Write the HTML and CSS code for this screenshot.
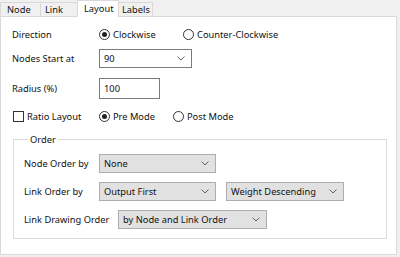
FILE: index.html
```html
<!DOCTYPE html>
<html lang="en">
<head>
  <meta charset="UTF-8" />
  <title>Layout</title>
  <link rel="stylesheet" href="styles.css">
</head>
<body>
  <div class="tabs">
    <div class="tab tab-node">Node</div>
    <div class="tab tab-link">Link</div>
    <div class="tab tab-layout active">Layout</div>
    <div class="tab tab-labels">Labels</div>
  </div>

  <div class="panel">
    <div class="row row-direction">
      <span class="label">Direction</span>
      <span class="opt opt-cw"><span class="radio on"></span>Clockwise</span>
      <span class="opt"><span class="radio"></span>Counter-Clockwise</span>
    </div>

    <div class="row row-start">
      <span class="label">Nodes Start at</span>
      <div class="combo edit w-start"><span>90</span><svg class="chev" width="8" height="5" viewBox="0 0 8 5"><polyline points="0.5,0.5 4,4 7.5,0.5" /></svg></div>
    </div>

    <div class="row row-radius">
      <span class="label">Radius (%)</span>
      <div class="textbox">100</div>
    </div>

    <div class="row row-ratio">
      <span class="label check-label"><span class="check"></span>Ratio Layout</span>
      <span class="opt opt-pre"><span class="radio on"></span>Pre Mode</span>
      <span class="opt"><span class="radio"></span>Post Mode</span>
    </div>

    <fieldset class="group">
      <legend>Order</legend>

      <div class="grow grow-first">
        <span class="glabel">Node Order by</span>
        <div class="combo w-order"><span>None</span><svg class="chev" width="8" height="5" viewBox="0 0 8 5"><polyline points="0.5,0.5 4,4 7.5,0.5" /></svg></div>
      </div>

      <div class="grow">
        <span class="glabel">Link Order by</span>
        <div class="combo w-order"><span>Output First</span><svg class="chev" width="8" height="5" viewBox="0 0 8 5"><polyline points="0.5,0.5 4,4 7.5,0.5" /></svg></div>
        <div class="combo w-weight"><span>Weight Descending</span><svg class="chev" width="8" height="5" viewBox="0 0 8 5"><polyline points="0.5,0.5 4,4 7.5,0.5" /></svg></div>
      </div>

      <div class="grow">
        <span class="glabel wide">Link Drawing Order</span>
        <div class="combo w-draw"><span>by Node and Link Order</span><svg class="chev" width="8" height="5" viewBox="0 0 8 5"><polyline points="0.5,0.5 4,4 7.5,0.5" /></svg></div>
      </div>
    </fieldset>
  </div>
</body>
</html>
```

FILE: styles.css
```css
* { box-sizing: border-box; }

body {
  margin: 0;
  width: 400px;
  height: 257px;
  background: #f0f0f0;
  font-family: "Noto Sans", "Open Sans", sans-serif;
  font-size: 9.3px;
  color: #111;
  overflow: hidden;
}

/* ---------- tabs ---------- */
.tabs {
  display: flex;
  align-items: flex-end;
  height: 16px;
}
.tab {
  height: 14px;
  line-height: 13px;
  padding-left: 6px;
  border: 1px solid #d9d9d9;
  border-bottom: none;
  background: #f0f0f0;
  margin-left: -1px;
}
.tab-node   { width: 41px; margin-left: 0; }
.tab-link   { width: 38px; padding-left: 4px; }
.tab-layout { width: 42px; }
.tab-labels { width: 35px; padding-left: 3px; }
.tab.active {
  position: relative;
  z-index: 1;
  height: 17px;
  line-height: 15px;
  margin-bottom: -1px;
  background: #fff;
}

/* ---------- panel ---------- */
.panel {
  width: 397px;
  height: 239px;
  background: #fff;
  border: 1px solid #d9d9d9;
  padding: 7px 0 0 11px;
}

.row {
  display: flex;
  align-items: center;
}
.row-direction { height: 20px; }
.row-start     { height: 19px; margin-top: 5px; }
.row-radius    { height: 21px; margin-top: 10px; }
.row-ratio     { height: 20px; margin-top: 7px; }

.label { width: 87px; }

.opt {
  display: flex;
  align-items: center;
}
.opt-cw  { width: 84px; }
.opt-pre { width: 74px; }

.radio {
  width: 11px;
  height: 11px;
  border: 1px solid #333;
  border-radius: 50%;
  margin-right: 3px;
  display: flex;
  align-items: center;
  justify-content: center;
}
.radio.on::after {
  content: "";
  width: 5px;
  height: 5px;
  border-radius: 50%;
  background: #222;
}

.check-label {
  display: flex;
  align-items: center;
  padding-left: 1px;
}
.check {
  width: 11px;
  height: 11px;
  border: 1px solid #333;
  margin-right: 3px;
}

/* ---------- inputs ---------- */
.combo {
  height: 19px;
  display: flex;
  align-items: center;
  justify-content: space-between;
  padding: 0 6px 0 4px;
  border: 1px solid #adadad;
  background: #e1e1e1;
}
.combo.edit {
  border-color: #7a7a7a;
  background: #fff;
}
.chev polyline {
  fill: none;
  stroke: #606060;
  stroke-width: 1;
}
.w-start  { width: 93px; }
.w-order  { width: 117px; }
.w-weight { width: 118px; margin-left: 10px; }
.w-draw   { width: 149px; }

.textbox {
  width: 61px;
  height: 21px;
  line-height: 19px;
  padding-left: 4px;
  border: 1px solid #7a7a7a;
  background: #fff;
}

/* ---------- group ---------- */
.group {
  width: 374px;
  margin: 7px 0 0 1px;
  padding: 0 0 9px 10px;
  border: 1px solid #dcdcdc;
}
.group legend {
  padding: 0 2px;
  margin-left: 4px;
  line-height: 13px;
}
.grow {
  display: flex;
  align-items: center;
  height: 19px;
  margin-top: 9px;
}
.grow-first { margin-top: 8px; }
.glabel { width: 75px; }
.glabel.wide { width: 94px; }
```
